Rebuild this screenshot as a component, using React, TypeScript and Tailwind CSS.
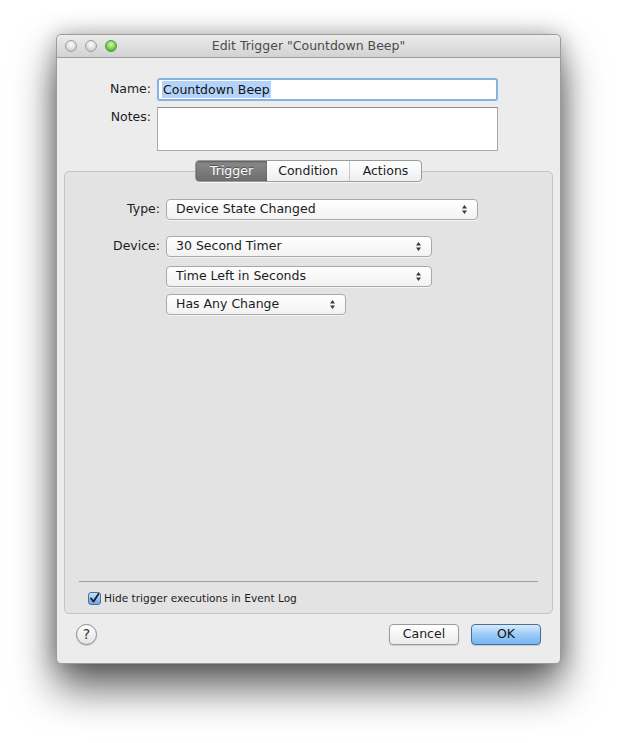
import React from 'react';

const font = { fontFamily: '"DejaVu Sans", "Liberation Sans", sans-serif' };

const Arrows: React.FC = () => (
  <svg width="7" height="11" viewBox="0 0 7 11" className="shrink-0">
    <path d="M3.5 1 L6 4.5 H1 Z" fill="#3a3a3a" />
    <path d="M3.5 10 L6 6.5 H1 Z" fill="#3a3a3a" />
  </svg>
);

const PopUp: React.FC<{ label: string; width: string }> = ({ label, width }) => (
  <div
    className={`${width} h-[21px] flex items-center justify-between pl-[9px] pr-[9px] rounded-[4px] border border-[#a9a9a9] bg-gradient-to-b from-white to-[#f2f2f2] shadow-[0_1px_0_rgba(255,255,255,0.6)] text-[12.5px] text-[#1c1c1c]`}
  >
    <span className="leading-none">{label}</span>
    <Arrows />
  </div>
);

const TrafficLight: React.FC<{ green?: boolean }> = ({ green }) => (
  <div
    className={
      green
        ? 'w-[12px] h-[12px] rounded-full border border-[#4f9a3c] bg-[radial-gradient(circle_at_50%_35%,#d7f7b4,#74cf4a_55%,#3f9a2a)]'
        : 'w-[12px] h-[12px] rounded-full border border-[#9f9f9f] bg-[radial-gradient(circle_at_50%_35%,#ffffff,#dcdcdc_55%,#b9b9b9)]'
    }
  />
);

const App: React.FC = () => {
  return (
    <div className="w-[617px] h-[743px] bg-white pl-[56px] pt-[34px]" style={font}>
      <div className="w-[505px] h-[630px] rounded-[5px] bg-[#ececec] flex flex-col border border-[#9b9b9b] shadow-[0_24px_42px_rgba(0,0,0,0.62),0_0_22px_rgba(0,0,0,0.28)]">
        {/* title bar */}
        <div className="relative h-[23px] shrink-0 rounded-t-[5px] bg-gradient-to-b from-[#ececec] to-[#d2d2d2] border-b border-[#9c9c9c] flex items-center justify-center">
          <div className="absolute left-[8px] top-[5px] flex gap-[8px]">
            <TrafficLight />
            <TrafficLight />
            <TrafficLight green />
          </div>
          <span className="text-[12.5px] text-[#4b4b4b]">Edit Trigger "Countdown Beep"</span>
        </div>

        {/* name + notes */}
        <div className="pt-[20px] flex flex-col gap-[6px]">
          <div className="flex items-center">
            <span className="w-[94px] text-right text-[12.5px] text-[#1c1c1c]">Name:</span>
            <div className="ml-[6px] w-[341px] h-[23px] rounded-[3px] border-[2px] border-[#86b1e4] p-[1px] bg-white flex items-center">
              <span className="ml-[2px] px-[1px] bg-[#b3d3fa] text-[12.5px] text-[#111] leading-[17px]">Countdown Beep</span>
            </div>
          </div>
          <div className="flex items-start">
            <span className="w-[94px] text-right text-[12.5px] text-[#1c1c1c] mt-[1px]">Notes:</span>
            <div className="ml-[6px] w-[341px] h-[44px] border border-[#a9a9a9] border-t-[#8f8f8f] bg-white" />
          </div>
        </div>

        {/* tab box */}
        <div className="mt-[20px] mx-[7px] h-[443px] rounded-[5px] border border-[#c4c4c4] bg-[#e3e3e3] flex flex-col">
          <div className="-mt-[12px] self-center flex h-[22px] rounded-[4px] border border-[#9a9a9a] bg-gradient-to-b from-white to-[#efefef] text-[12.5px] overflow-hidden shadow-[0_1px_0_rgba(255,255,255,0.7)]">
            <div className="w-[71px] flex items-center justify-center bg-gradient-to-b from-[#8a8a8a] to-[#6d6d6d] text-white [text-shadow:0_-1px_0_rgba(0,0,0,0.4)] shadow-[inset_0_1px_2px_rgba(0,0,0,0.35)]">
              Trigger
            </div>
            <div className="w-[83px] flex items-center justify-center text-[#1c1c1c] border-r border-[#c8c8c8]">
              Condition
            </div>
            <div className="w-[71px] flex items-center justify-center text-[#1c1c1c]">Actions</div>
          </div>

          <div className="pt-[17px] flex flex-col">
            <div className="flex items-center">
              <span className="w-[95px] text-right text-[12.5px] text-[#1c1c1c]">Type:</span>
              <div className="ml-[6px]">
                <PopUp label="Device State Changed" width="w-[312px]" />
              </div>
            </div>
            <div className="mt-[16px] flex items-center">
              <span className="w-[95px] text-right text-[12.5px] text-[#1c1c1c]">Device:</span>
              <div className="ml-[6px]">
                <PopUp label="30 Second Timer" width="w-[266px]" />
              </div>
            </div>
            <div className="mt-[9px] pl-[101px]">
              <PopUp label="Time Left in Seconds" width="w-[266px]" />
            </div>
            <div className="mt-[7px] pl-[101px]">
              <PopUp label="Has Any Change" width="w-[180px]" />
            </div>
          </div>

          <div className="mt-auto mx-[14px] border-t border-[#9e9e9e]" />
          <div className="h-[31px] flex items-center pl-[23px] pt-[2px]">
            <div className="w-[13px] h-[13px] rounded-[3px] border border-[#4b6f9c] bg-gradient-to-b from-[#c9e0f8] to-[#6aa6e4] flex items-center justify-center">
              <svg width="11" height="11" viewBox="0 0 11 11">
                <path d="M2 5.5 L4.5 8.5 L9.5 1" fill="none" stroke="#1a1a1a" strokeWidth="1.8" strokeLinecap="round" strokeLinejoin="round" />
              </svg>
            </div>
            <span className="ml-[3px] text-[10.6px] text-[#1c1c1c]">Hide trigger executions in Event Log</span>
          </div>
        </div>

        {/* bottom buttons */}
        <div className="flex-1 flex items-center px-[19px] pb-[8px]">
          <div className="w-[21px] h-[21px] rounded-full border border-[#8a8a8a] bg-gradient-to-b from-white to-[#e4e4e4] flex items-center justify-center text-[14px] text-[#333] shadow-[0_1px_1px_rgba(0,0,0,0.15)]">
            ?
          </div>
          <div className="ml-auto flex gap-[12px]">
            <div className="w-[70px] h-[21px] rounded-[4px] border border-[#9a9a9a] bg-gradient-to-b from-white to-[#ececec] flex items-center justify-center text-[12.5px] text-[#1c1c1c] shadow-[0_1px_1px_rgba(0,0,0,0.12)]">
              Cancel
            </div>
            <div className="w-[70px] h-[21px] rounded-[4px] border border-[#4d6d9a] bg-gradient-to-b from-[#d9ebfc] via-[#9ccaf5] to-[#74b6f3] flex items-center justify-center text-[12.5px] text-[#111] shadow-[0_1px_1px_rgba(0,0,0,0.15)]">
              OK
            </div>
          </div>
        </div>
      </div>
    </div>
  );
};

export default App;
